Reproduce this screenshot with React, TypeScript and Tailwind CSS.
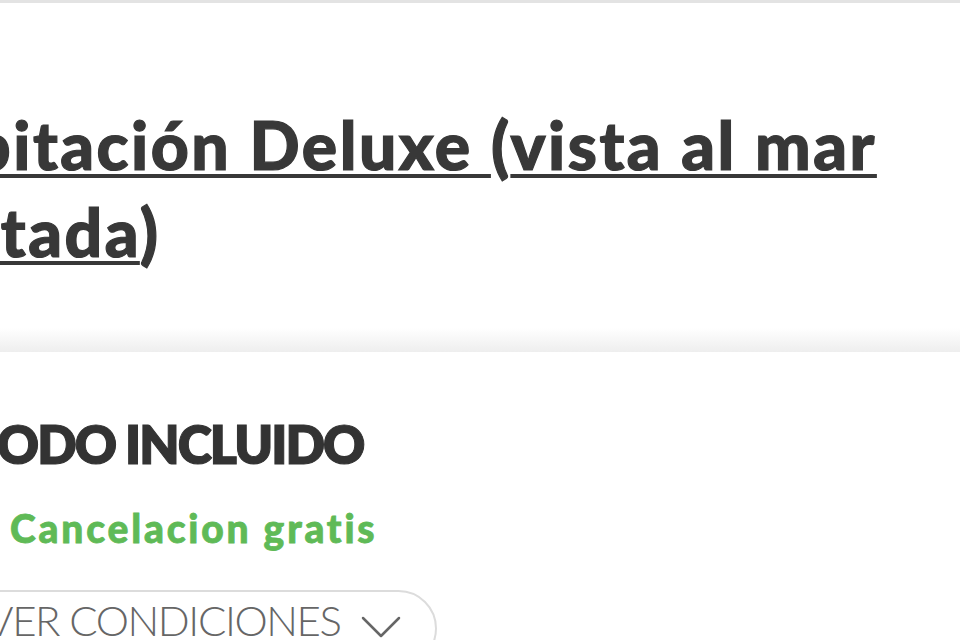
import React from 'react';
import { Check } from 'lucide-react';

const RoomHeader: React.FC = () => (
  <div className="border-t-[3px] border-[#e3e3e3]">
    <div className="pt-[98px] pb-[53px] ml-[-116px]">
      <h1 className="text-[66px] leading-[87px] font-black tracking-[2.5px] [-webkit-text-stroke:1.2px_#383838] text-[#383838] whitespace-nowrap">
        <a href="#" className="underline decoration-4 underline-offset-[4px]">Habitación Deluxe </a>
        (
        <a href="#" className="underline decoration-4 underline-offset-[4px]">
          vista al mar
          <br />
          limitada
        </a>
        )
      </h1>
    </div>
    <div className="h-[24px] bg-gradient-to-b from-white to-[#eeeeee]" />
  </div>
);

const RateCard: React.FC = () => (
  <div className="pt-[60px] ml-[-36px]">
    <h2 className="ml-[4px] text-[52px] leading-[64px] font-extrabold tracking-[-2px] [-webkit-text-stroke:1px_#333333] text-[#333333] whitespace-nowrap">
      TODO INCLUIDO
    </h2>
    <div className="mt-[28px] flex items-center gap-[10px] text-[#5fba57]">
      <Check className="w-[36px] h-[36px] shrink-0" strokeWidth={3.5} />
      <span className="text-[39px] leading-[48px] font-black tracking-[2.8px] [-webkit-text-stroke:0.8px_#5fba57] whitespace-nowrap">Cancelacion gratis</span>
    </div>
    <button
      type="button"
      className="mt-[38px] flex items-start gap-[20px] pl-[20px] pr-[34px] pt-[3px] pb-[20px] border-2 border-[#dcdcdc] rounded-[48px] text-[#666666]"
    >
      <span className="text-[42px] leading-[50px] font-light tracking-[-1.4px] whitespace-nowrap">VER CONDICIONES</span>
      <svg className="w-[40px] h-[24px] mt-[20px] shrink-0" viewBox="0 0 40 24" fill="none" stroke="currentColor" strokeWidth="2.5" strokeLinecap="round" strokeLinejoin="round">
        <polyline points="2,3 20,21 38,3" />
      </svg>
    </button>
  </div>
);

export default function App() {
  return (
    <div className="w-[960px] h-[640px] overflow-hidden bg-white font-['Lato',sans-serif]">
      <RoomHeader />
      <RateCard />
    </div>
  );
}
